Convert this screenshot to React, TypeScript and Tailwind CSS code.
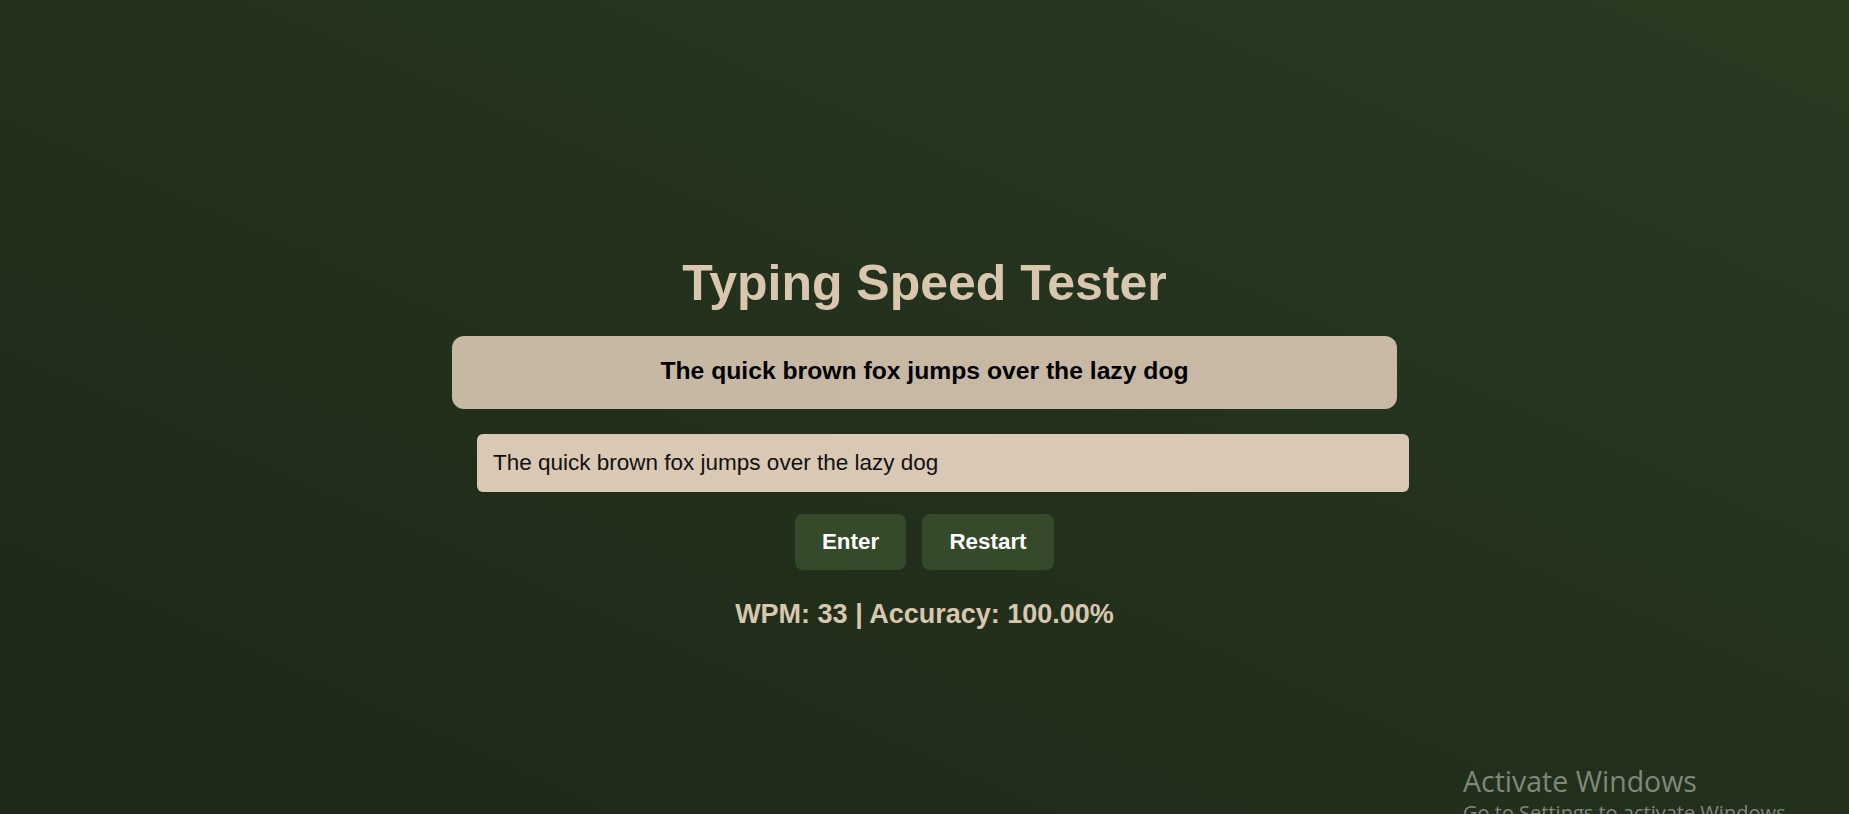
import React, { useState } from "react";

const SAMPLE = "The quick brown fox jumps over the lazy dog";

const App: React.FC = () => {
  const [typed, setTyped] = useState<string>(SAMPLE);
  const [result, setResult] = useState<string>("WPM: 33 | Accuracy: 100.00%");

  const handleEnter = () => {
    const words = typed.trim().split(/\s+/).filter(Boolean).length;
    let correct = 0;
    for (let i = 0; i < SAMPLE.length; i++) {
      if (typed[i] === SAMPLE[i]) correct++;
    }
    const acc = ((correct / SAMPLE.length) * 100).toFixed(2);
    setResult(`WPM: ${Math.round(words * 3.7)} | Accuracy: ${acc}%`);
  };

  const handleRestart = () => {
    setTyped("");
    setResult("WPM: 0 | Accuracy: 0.00%");
  };

  return (
    <div className="relative min-h-[814px] overflow-hidden bg-gradient-to-tr from-[#1e2918] via-[#23311c] to-[#2a3b22] font-['Liberation_Sans',Arial,sans-serif]">
      <div className="flex flex-col items-center pt-[255px]">
        <h1 className="text-[50px] leading-[57px] font-bold text-[#d8c7ae]">
          Typing Speed Tester
        </h1>

        <div className="mt-[24px] w-[945px]">
          <div className="flex h-[73px] items-center justify-center rounded-xl bg-gradient-to-r from-[#c6b8a3] to-[#c8b9a4] pb-[3px] text-[24.7px] font-bold text-black">
            {SAMPLE}
          </div>

          <input
            type="text"
            value={typed}
            onChange={(e) => setTyped(e.target.value)}
            className="mt-[25px] ml-[25px] block h-[58px] w-[932px] rounded-md bg-[#d9c8b3] px-4 text-[22.5px] text-[#111] outline-none"
          />
        </div>

        <div className="mt-[22px] flex gap-4">
          <button
            onClick={handleEnter}
            className="flex h-[56px] w-[111px] items-center justify-center rounded-lg bg-[#344a2a] text-[22.4px] font-bold text-white"
          >
            Enter
          </button>
          <button
            onClick={handleRestart}
            className="flex h-[56px] w-[132px] items-center justify-center rounded-lg bg-[#344a2a] text-[22.4px] font-bold text-white"
          >
            Restart
          </button>
        </div>

        <p className="mt-[29px] text-[27px] leading-[31px] font-bold text-[#d8c7ae]">
          {result}
        </p>
      </div>

      {/* windows watermark */}
      <div className="pointer-events-none absolute left-[1463px] top-[762px] font-['Open_Sans',sans-serif] text-[#7f8879]">
        <div className="text-[28.5px] leading-[38px]">Activate Windows</div>
        <div className="text-[20px] leading-[26px] whitespace-nowrap">Go to Settings to activate Windows.</div>
      </div>
    </div>
  );
};

export default App;
